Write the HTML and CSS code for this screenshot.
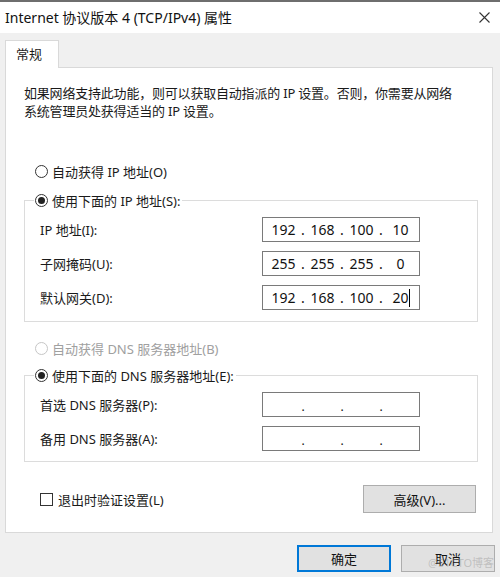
FILE: index.html
```html
<!DOCTYPE html>
<html lang="zh-CN">
<head>
    <meta charset="UTF-8">
    <title>Internet 协议版本 4 (TCP/IPv4) 属性</title>
    <link rel="stylesheet" href="styles.css">
</head>
<body>
    <div class="window">
        <div class="titlebar">
            <span class="title">Internet 协议版本 4 (TCP/IPv4) 属性</span>
            <svg class="close" width="11" height="11" viewBox="0 0 11 11">
                <path d="M0.5 0.5 L10.5 10.5 M10.5 0.5 L0.5 10.5" stroke="#333" stroke-width="1.1" fill="none"/>
            </svg>
        </div>

        <div class="body">
            <div class="tabs">
                <div class="tab">常规</div>
            </div>

            <div class="panel">
                <p class="desc">如果网络支持此功能，则可以获取自动指派的 IP 设置。否则，你需要从网络<br>系统管理员处获得适当的 IP 设置。</p>

                <label class="radio-row first">
                    <span class="radio"></span>自动获得 IP 地址(O)
                </label>

                <fieldset class="group ip-group">
                    <legend><span class="radio checked"></span>使用下面的 IP 地址(S):</legend>
                    <div class="field-row">
                        <span class="label">IP 地址(I):</span>
                        <div class="ip-box">
                            <span class="seg">192</span><span class="dot">.</span><span class="seg">168</span><span class="dot">.</span><span class="seg">100</span><span class="dot">.</span><span class="seg">10</span>
                        </div>
                    </div>
                    <div class="field-row">
                        <span class="label">子网掩码(U):</span>
                        <div class="ip-box">
                            <span class="seg">255</span><span class="dot">.</span><span class="seg">255</span><span class="dot">.</span><span class="seg">255</span><span class="dot">.</span><span class="seg">0</span>
                        </div>
                    </div>
                    <div class="field-row">
                        <span class="label">默认网关(D):</span>
                        <div class="ip-box">
                            <span class="seg">192</span><span class="dot">.</span><span class="seg">168</span><span class="dot">.</span><span class="seg">100</span><span class="dot">.</span><span class="seg caret">20</span>
                        </div>
                    </div>
                </fieldset>

                <label class="radio-row disabled">
                    <span class="radio"></span>自动获得 DNS 服务器地址(B)
                </label>

                <fieldset class="group dns-group">
                    <legend><span class="radio checked"></span>使用下面的 DNS 服务器地址(E):</legend>
                    <div class="field-row">
                        <span class="label">首选 DNS 服务器(P):</span>
                        <div class="ip-box empty">
                            <span class="seg"></span><span class="dot">.</span><span class="seg"></span><span class="dot">.</span><span class="seg"></span><span class="dot">.</span><span class="seg"></span>
                        </div>
                    </div>
                    <div class="field-row">
                        <span class="label">备用 DNS 服务器(A):</span>
                        <div class="ip-box empty">
                            <span class="seg"></span><span class="dot">.</span><span class="seg"></span><span class="dot">.</span><span class="seg"></span><span class="dot">.</span><span class="seg"></span>
                        </div>
                    </div>
                </fieldset>

                <div class="bottom-row">
                    <label class="check-row"><span class="checkbox"></span>退出时验证设置(L)</label>
                    <button class="btn advanced">高级(V)...</button>
                </div>
            </div>

            <div class="footer">
                <button class="btn default">确定</button>
                <button class="btn">取消</button>
            </div>
        </div>

        <span class="watermark">@51CTO博客</span>
    </div>
</body>
</html>
```

FILE: styles.css
```css
body {
    margin: 0;
    padding: 0;
    background-color: #f0f0f0;
    font-family: "Noto Sans", "Noto Sans CJK SC", sans-serif;
    font-size: 13px;
    color: #1a1a1a;
}

.window {
    position: relative;
    width: 500px;
    height: 577px;
    overflow: hidden;
}

.titlebar {
    height: 30px;
    border-top: 2px solid #6e6e6e;
    background-color: white;
    display: flex;
    align-items: center;
    justify-content: space-between;
    padding: 0 10px 1px 5px;
    box-sizing: content-box;
}

.title {
    font-size: 14px;
    color: #111;
}

.body {
    padding: 7px 7px 0 5px;
}

.tabs {
    display: flex;
}

.tab {
    width: 54px;
    height: 28px;
    box-sizing: border-box;
    padding-left: 10px;
    line-height: 26px;
    background-color: white;
    border: 1px solid #d9d9d9;
    border-bottom: none;
    margin-bottom: -1px;
    position: relative;
    z-index: 1;
}

.panel {
    background-color: white;
    border: 1px solid #d9d9d9;
    height: 466px;
    box-sizing: border-box;
    padding: 16px 14px 0 18px;
}

.desc {
    margin: 0;
    line-height: 18px;
    letter-spacing: -0.2px;
}

.radio-row {
    display: flex;
    align-items: center;
    height: 18px;
    padding-left: 11px;
}

.radio-row.first {
    margin-top: 42px;
}

.radio-row.disabled {
    margin-top: 17px;
    color: #a0a0a0;
}

.radio {
    display: inline-block;
    width: 13px;
    height: 13px;
    box-sizing: border-box;
    border: 1px solid #333;
    border-radius: 50%;
    margin-right: 4px;
    position: relative;
}

.radio.checked::after {
    content: "";
    position: absolute;
    left: 2px;
    top: 2px;
    width: 7px;
    height: 7px;
    border-radius: 50%;
    background-color: #222;
}

.disabled .radio {
    border-color: #c6c6c6;
}

.group {
    margin: 0;
    padding: 0 0 10px 0;
    border: 1px solid #dcdcdc;
}

.group legend {
    display: flex;
    align-items: center;
    height: 18px;
    margin-left: 9px;
    padding: 0 2px 0 1px;
}

.ip-group {
    margin-top: 11px;
    padding-bottom: 11px;
}

.dns-group {
    margin-top: 9px;
}

.field-row {
    display: flex;
    align-items: center;
    padding-left: 15px;
    margin-top: 9px;
}

.field-row:first-of-type {
    margin-top: 8px;
}

.label {
    width: 222px;
}

.ip-box {
    width: 158px;
    height: 25px;
    box-sizing: border-box;
    border: 1px solid #7a7a7a;
    display: flex;
    align-items: center;
    padding-left: 5px;
    font-size: 14px;
    color: #111;
}

.seg {
    width: 31px;
    text-align: center;
    position: relative;
}

.dot {
    width: 8px;
    text-align: center;
}

.ip-box.empty {
    padding-top: 4px;
    font-size: 12px;
}

.caret::after {
    content: "";
    position: absolute;
    top: 1px;
    right: 6px;
    width: 1px;
    height: 18px;
    background-color: #000;
}

.bottom-row {
    display: flex;
    align-items: center;
    justify-content: space-between;
    margin-top: 23px;
    padding: 0 2px 0 16px;
}

.check-row {
    display: flex;
    align-items: center;
}

.checkbox {
    width: 13px;
    height: 13px;
    box-sizing: border-box;
    border: 1px solid #333;
    margin-right: 5px;
}

.btn {
    font-family: inherit;
    font-size: 13px;
    color: #111;
    background-color: #e1e1e1;
    border: 1px solid #adadad;
    padding: 0;
    box-sizing: border-box;
}

.advanced {
    width: 113px;
    height: 28px;
}

.footer {
    display: flex;
    justify-content: flex-end;
    gap: 10px;
    margin-top: 12px;
    margin-right: -2px;
}

.footer .btn {
    width: 94px;
    height: 27px;
}

.footer .btn.default {
    border: 2px solid #0078d7;
}

.watermark {
    position: absolute;
    right: 6px;
    bottom: 7px;
    font-size: 11px;
    color: rgba(150, 150, 150, 0.45);
}
```
